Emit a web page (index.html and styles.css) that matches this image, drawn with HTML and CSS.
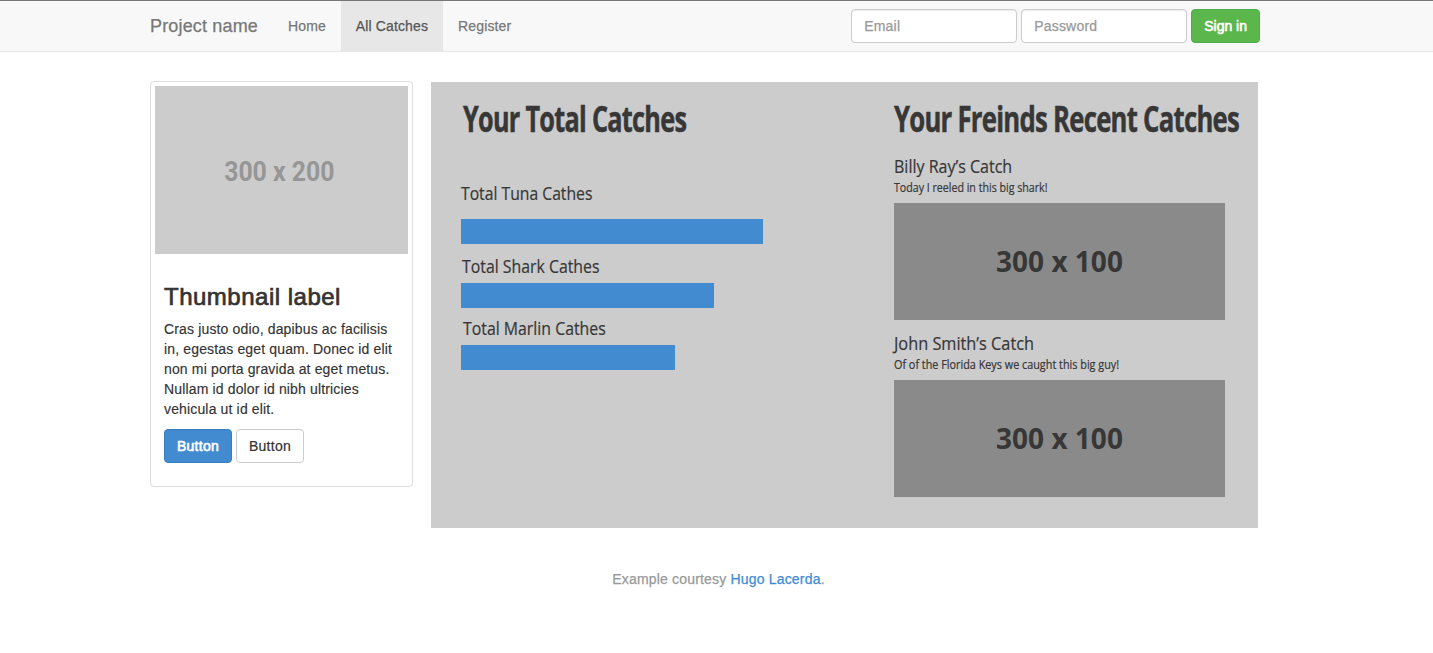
FILE: index.html
```html
<!DOCTYPE html>
<html lang="en">
<head>
<meta charset="utf-8">
<title>All Catches</title>
<link rel="stylesheet" href="styles.css">
</head>
<body>
<header class="navbar">
  <div class="container navbar-inner">
    <a class="brand">Project name</a>
    <nav class="nav">
      <a class="nav-link">Home</a>
      <a class="nav-link active">All Catches</a>
      <a class="nav-link">Register</a>
    </nav>
    <form class="signin">
      <input class="field" type="text" placeholder="Email">
      <input class="field" type="password" placeholder="Password">
      <button class="btn btn-success" type="button">Sign in</button>
    </form>
  </div>
</header>
<main class="container content">
  <section class="card">
    <div class="thumb"><span class="thumb-size">300 x 200</span></div>
    <div class="caption">
      <h3 class="card-title">Thumbnail label</h3>
      <p class="card-text">Cras justo odio, dapibus ac facilisis in, egestas eget quam. Donec id elit non mi porta gravida at eget metus. Nullam id dolor id nibh ultricies vehicula ut id elit.</p>
      <div class="actions">
        <button class="btn btn-primary" type="button">Button</button>
        <button class="btn btn-default" type="button">Button</button>
      </div>
    </div>
  </section>
  <section class="panel">
    <div class="totals">
      <h2 class="heading heading-totals">Your Total Catches</h2>
      <div class="stat tuna">
        <div class="label">Total Tuna Cathes</div>
        <div class="bar"></div>
      </div>
      <div class="stat shark">
        <div class="label">Total Shark Cathes</div>
        <div class="bar"></div>
      </div>
      <div class="stat marlin">
        <div class="label">Total Marlin Cathes</div>
        <div class="bar"></div>
      </div>
    </div>
    <div class="recent">
      <h2 class="heading heading-recent">Your Freinds Recent Catches</h2>
      <article class="catch billy">
        <div class="label">Billy Ray’s Catch</div>
        <div class="note">Today I reeled in this big shark!</div>
        <div class="photo">300 x 100</div>
      </article>
      <article class="catch john">
        <div class="label">John Smith’s Catch</div>
        <div class="note">Of of the Florida Keys we caught this big guy!</div>
        <div class="photo">300 x 100</div>
      </article>
    </div>
  </section>
</main>
<footer class="footer">Example courtesy <a class="footer-link">Hugo Lacerda</a>.</footer>
</body>
</html>
```
FILE: styles.css
```css
* { box-sizing: border-box; }
body { margin: 0; font: 14px/20px "Liberation Sans", Arial, sans-serif; color: #333; background: #fff; }
h2, h3, p { margin: 0; }
.container { width: 1110px; margin-left: 150px; }

/* Navigation bar */
.navbar { height: 52px; border-top: 1px solid #777; border-bottom: 1px solid #e7e7e7; background: #f8f8f8; }
.navbar-inner { display: flex; height: 50px; }
.brand { padding: 15px 15px 15px 0; font-size: 18px; letter-spacing: .16px; color: #777; -webkit-text-stroke: .25px; }
.nav { display: flex; letter-spacing: .13px; -webkit-text-stroke: .25px; }
.nav-link { padding: 15px; color: #777; }
.nav-link.active { background: #e7e7e7; color: #555; }
.signin { display: flex; gap: 4px; margin-left: auto; padding-top: 8px; }
.field { width: 166px; height: 34px; padding: 6px 12px; border: 1px solid #ccc; border-radius: 4px; background: #fff; box-shadow: inset 0 1px 1px rgba(0, 0, 0, .075); font: inherit; }
.field::placeholder { color: #999; opacity: 1; letter-spacing: .2px; -webkit-text-stroke: .25px; }
.btn { height: 34px; padding: 6px 12px; border: 1px solid; border-radius: 4px; font: inherit; }
.btn-success { background: #5bb74b; border-color: #4cae4c; color: #fff; -webkit-text-stroke: .6px; }
.btn-primary { background: #428bd0; border-color: #357ebd; color: #fff; letter-spacing: .25px; -webkit-text-stroke: .6px; }
.btn-default { background: #fff; border-color: #ccc; color: #333; letter-spacing: .25px; -webkit-text-stroke: .2px; }

.content { display: flex; align-items: flex-start; gap: 18px; padding-top: 29px; }

/* Thumbnail card */
.card { width: 263px; height: 406px; padding: 4px; border: 1px solid #ddd; border-radius: 4px; }
.thumb { display: flex; align-items: center; justify-content: center; height: 168px; padding: 4px 4px 0 0; background: #ccc; }
.thumb-size { font: bold 28px/34px Roboto, sans-serif; color: #969696; transform: scaleX(.885); }
.caption { padding: 30px 9px 0; }
.card-title { font-size: 24px; line-height: 26px; font-weight: 400; letter-spacing: .5px; -webkit-text-stroke: .7px; }
.card-text { margin: 9px 0 10px; letter-spacing: .15px; -webkit-text-stroke: .15px; }
.actions { display: flex; gap: 4px; }

/* Statistics panel */
.panel { display: flex; width: 827px; height: 446px; margin-top: 1px; padding: 17px 0 0 30px; background: #ccc; font-family: "Open Sans", "Noto Sans", sans-serif; color: #373737; white-space: nowrap; }
.totals { width: 433px; }
.heading { width: max-content; font-size: 35px; line-height: 40px; font-weight: 700; letter-spacing: -1px; transform-origin: left; margin-right: -200px; -webkit-text-stroke: .5px; }
.heading-totals { margin-left: 2px; transform: scaleX(.722); }
.heading-recent { transform: scaleX(.734); }
.label { font-size: 18px; line-height: 20px; transform-origin: left; -webkit-text-stroke: .2px; }
.bar { height: 25px; background: #428bd0; }
.tuna { margin-top: 44px; }
.tuna .label { margin-bottom: 16px; transform: scaleX(.873); }
.tuna .bar { width: 302px; }
.shark { margin-top: 12px; }
.shark .label { margin: 0 0 7px 1px; transform: scaleX(.88); }
.shark .bar { width: 253px; }
.marlin { margin-top: 10px; }
.marlin .label { margin: 0 0 7px 2px; transform: scaleX(.88); }
.marlin .bar { width: 214px; }
.recent { width: 331px; }
.note { margin: 4px 0 7px; font-size: 12px; line-height: 16px; transform-origin: left; -webkit-text-stroke: .2px; }
.billy { margin-top: 17px; }
.billy .label { transform: scaleX(.89); }
.billy .note { transform: scaleX(.886); }
.john { margin-top: 13px; }
.john .label { transform: scaleX(.905); }
.john .note { transform: scaleX(.902); }
.photo { display: flex; align-items: center; justify-content: center; height: 117px; padding-bottom: 2px; background: #8a8a8a; font-size: 28px; line-height: 34px; font-weight: 700; }

.footer { margin-top: 41px; padding-left: 4px; text-align: center; color: #999; letter-spacing: .18px; -webkit-text-stroke: .25px; }
.footer-link { color: #428bd8; }
```
